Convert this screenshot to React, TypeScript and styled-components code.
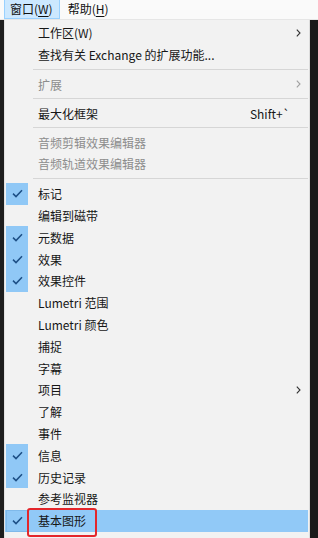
import React from "react";
import styled, { createGlobalStyle } from "styled-components";

const Global = createGlobalStyle`
  html, body { margin: 0; padding: 0; background: #1c1c1c; }
  body { font-family: "Noto Sans CJK SC", "Noto Sans", sans-serif; }
`;

const Screen = styled.div`
  width: 318px;
  height: 538px;
  display: flex;
  flex-direction: column;
  overflow: hidden;
  background: #1c1c1c;
`;

const MenuBar = styled.div`
  height: 19px;
  background: #fafafa;
  display: flex;
  align-items: stretch;
  padding-left: 4px;
  gap: 2px;
  border-bottom: 1px solid #e6e6e6;
`;

const BarItem = styled.div<{ $active?: boolean }>`
  display: flex;
  align-items: center;
  padding: 0 6px 0 5px;
  font-size: 12px;
  color: #111;
  background: ${(p) => (p.$active ? "#cce8ff" : "transparent")};
  border: 1px solid ${(p) => (p.$active ? "#99d1ff" : "transparent")};
  border-top: none;
  line-height: 1;
  u { text-decoration: underline; text-underline-offset: 2px; }
`;

const Body = styled.div`
  flex: 1;
  display: flex;
`;

const LeftStrip = styled.div`
  width: 4px;
  background: #1e1e1e;
`;

const RightStrip = styled.div`
  width: 8px;
  background: #1a1a1a;
`;

const Menu = styled.div`
  flex: 1;
  background: #f2f2f2;
  border-left: 1px solid #e2e2e2;
  border-right: 1px solid #dcdcdc;
  padding: 2px 1px 0 0;
  display: flex;
  flex-direction: column;
`;

const Row = styled.div<{ $disabled?: boolean; $selected?: boolean }>`
  position: relative;
  height: 21.8px;
  flex: 0 0 21.8px;
  display: grid;
  grid-template-columns: 22px 1fr auto 18px;
  align-items: center;
  padding-left: 1px;
  font-size: 12px;
  color: ${(p) => (p.$disabled ? "#8d8d8d" : "#161616")};
  background: ${(p) => (p.$selected ? "#91c9f7" : "transparent")};
`;

const Check = styled.div<{ $on?: boolean; $selected?: boolean }>`
  height: 100%;
  display: flex;
  align-items: center;
  justify-content: center;
  background: ${(p) => (p.$on ? "#90c8f6" : "transparent")};
  box-shadow: ${(p) => (p.$selected ? "inset 0 0 0 1px #7fb9ea" : "none")};
`;

const Label = styled.span`
  padding-left: 10px;
  white-space: nowrap;
`;

const Shortcut = styled.span`
  white-space: nowrap;
`;

const ArrowCell = styled.div`
  display: flex;
  align-items: center;
  justify-content: flex-start;
  padding-left: 6px;
`;

const Separator = styled.div<{ $h: number }>`
  flex: 0 0 ${(p) => p.$h}px;
  display: flex;
  align-items: center;
  padding-left: 28px;
  &::after {
    content: "";
    flex: 1;
    height: 1px;
    background: #d6d6d6;
  }
`;

const Marker = styled.div`
  position: absolute;
  left: 22px;
  top: -2px;
  width: 66px;
  height: 25px;
  border: 2.5px solid #e3262b;
  border-radius: 3px;
`;

const Tick = () => (
  <svg width="11" height="9" viewBox="0 0 11 9">
    <path d="M1 4.6 L4 7.6 L10 1.2" fill="none" stroke="#1d4f86" strokeWidth="1.5" />
  </svg>
);

const Chevron = ({ color }: { color: string }) => (
  <svg width="5" height="8" viewBox="0 0 5 8">
    <path d="M0.8 0.6 L4 4 L0.8 7.4" fill="none" stroke={color} strokeWidth="1.1" />
  </svg>
);

type Item =
  | { sep: number }
  | {
      label: string;
      check?: boolean;
      disabled?: boolean;
      arrow?: boolean;
      shortcut?: string;
      selected?: boolean;
    };

const items: Item[] = [
  { label: "工作区(W)", arrow: true },
  { label: "查找有关 Exchange 的扩展功能..." },
  { sep: 8 },
  { label: "扩展", disabled: true, arrow: true },
  { sep: 7 },
  { label: "最大化框架", shortcut: "Shift+`" },
  { sep: 7 },
  { label: "音频剪辑效果编辑器", disabled: true },
  { label: "音频轨道效果编辑器", disabled: true },
  { sep: 8 },
  { label: "标记", check: true },
  { label: "编辑到磁带" },
  { label: "元数据", check: true },
  { label: "效果", check: true },
  { label: "效果控件", check: true },
  { label: "Lumetri 范围" },
  { label: "Lumetri 颜色" },
  { label: "捕捉" },
  { label: "字幕" },
  { label: "项目", arrow: true },
  { label: "了解" },
  { label: "事件" },
  { label: "信息", check: true },
  { label: "历史记录", check: true },
  { label: "参考监视器" },
  { label: "基本图形", check: true, selected: true },
];

export default function App() {
  return (
    <Screen>
      <Global />
      <MenuBar>
        <BarItem $active>
          窗口(<u>W</u>)
        </BarItem>
        <BarItem>
          帮助(<u>H</u>)
        </BarItem>
      </MenuBar>
      <Body>
        <LeftStrip />
        <Menu>
          {items.map((it, i) =>
            "sep" in it ? (
              <Separator key={i} $h={it.sep} />
            ) : (
              <Row key={i} $disabled={it.disabled} $selected={it.selected}>
                <Check $on={it.check} $selected={it.selected}>
                  {it.check && <Tick />}
                </Check>
                <Label>{it.label}</Label>
                <Shortcut>{it.shortcut ?? ""}</Shortcut>
                <ArrowCell>
                  {it.arrow && <Chevron color={it.disabled ? "#a0a0a0" : "#333"} />}
                </ArrowCell>
                {it.selected && <Marker />}
              </Row>
            )
          )}
        </Menu>
        <RightStrip />
      </Body>
    </Screen>
  );
}
